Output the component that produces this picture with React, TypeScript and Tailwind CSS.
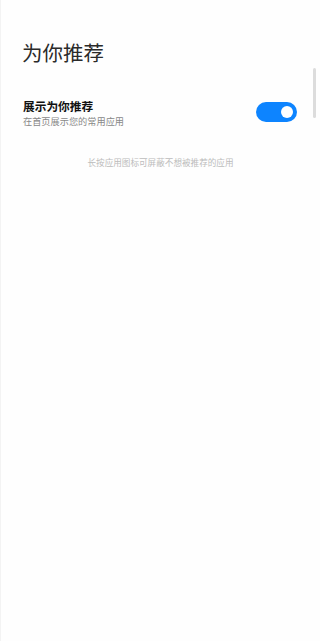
import React, { useState } from 'react';

const font = { fontFamily: '"Noto Sans CJK SC", "Noto Sans", sans-serif' };

const App: React.FC = () => {
  const [enabled, setEnabled] = useState(true);

  return (
    <div className="relative w-[320px] h-[641px] bg-[#fefefe] overflow-hidden border-l border-[#f3f3f3]" style={font}>
      {/* Scrollbar */}
      <div className="absolute right-[4px] top-[68px] w-[3px] h-[50px] rounded-full bg-[#dcdcdc]" />

      {/* Title */}
      <div className="px-[21px] pt-[38px]">
        <h1 className="text-[20.5px] leading-[28px] font-normal text-[#2a2a2a]">为你推荐</h1>
      </div>

      {/* Setting row */}
      <div className="flex items-start justify-between pl-[22px] pr-[23px] mt-[32px]">
        <div className="flex flex-col">
          <span className="text-[11.7px] leading-[16px] font-bold text-[#111]">展示为你推荐</span>
          <span className="text-[9.2px] leading-[14px] text-[#888]">在首页展示您的常用应用</span>
        </div>
        <button
          onClick={() => setEnabled(!enabled)}
          className={`relative mt-[4px] w-[41px] h-[20px] rounded-full transition-colors ${enabled ? 'bg-[#0d84ff]' : 'bg-[#d9d9d9]'}`}
        >
          <span className={`absolute top-[4px] w-[12px] h-[12px] rounded-full bg-white transition-all ${enabled ? 'left-[25px]' : 'left-[4px]'}`} />
        </button>
      </div>

      {/* Hint */}
      <p className="mt-[28px] text-center text-[8.6px] leading-[12px] text-[#bcbcbc]">长按应用图标可屏蔽不想被推荐的应用</p>
    </div>
  );
};

export default App;
